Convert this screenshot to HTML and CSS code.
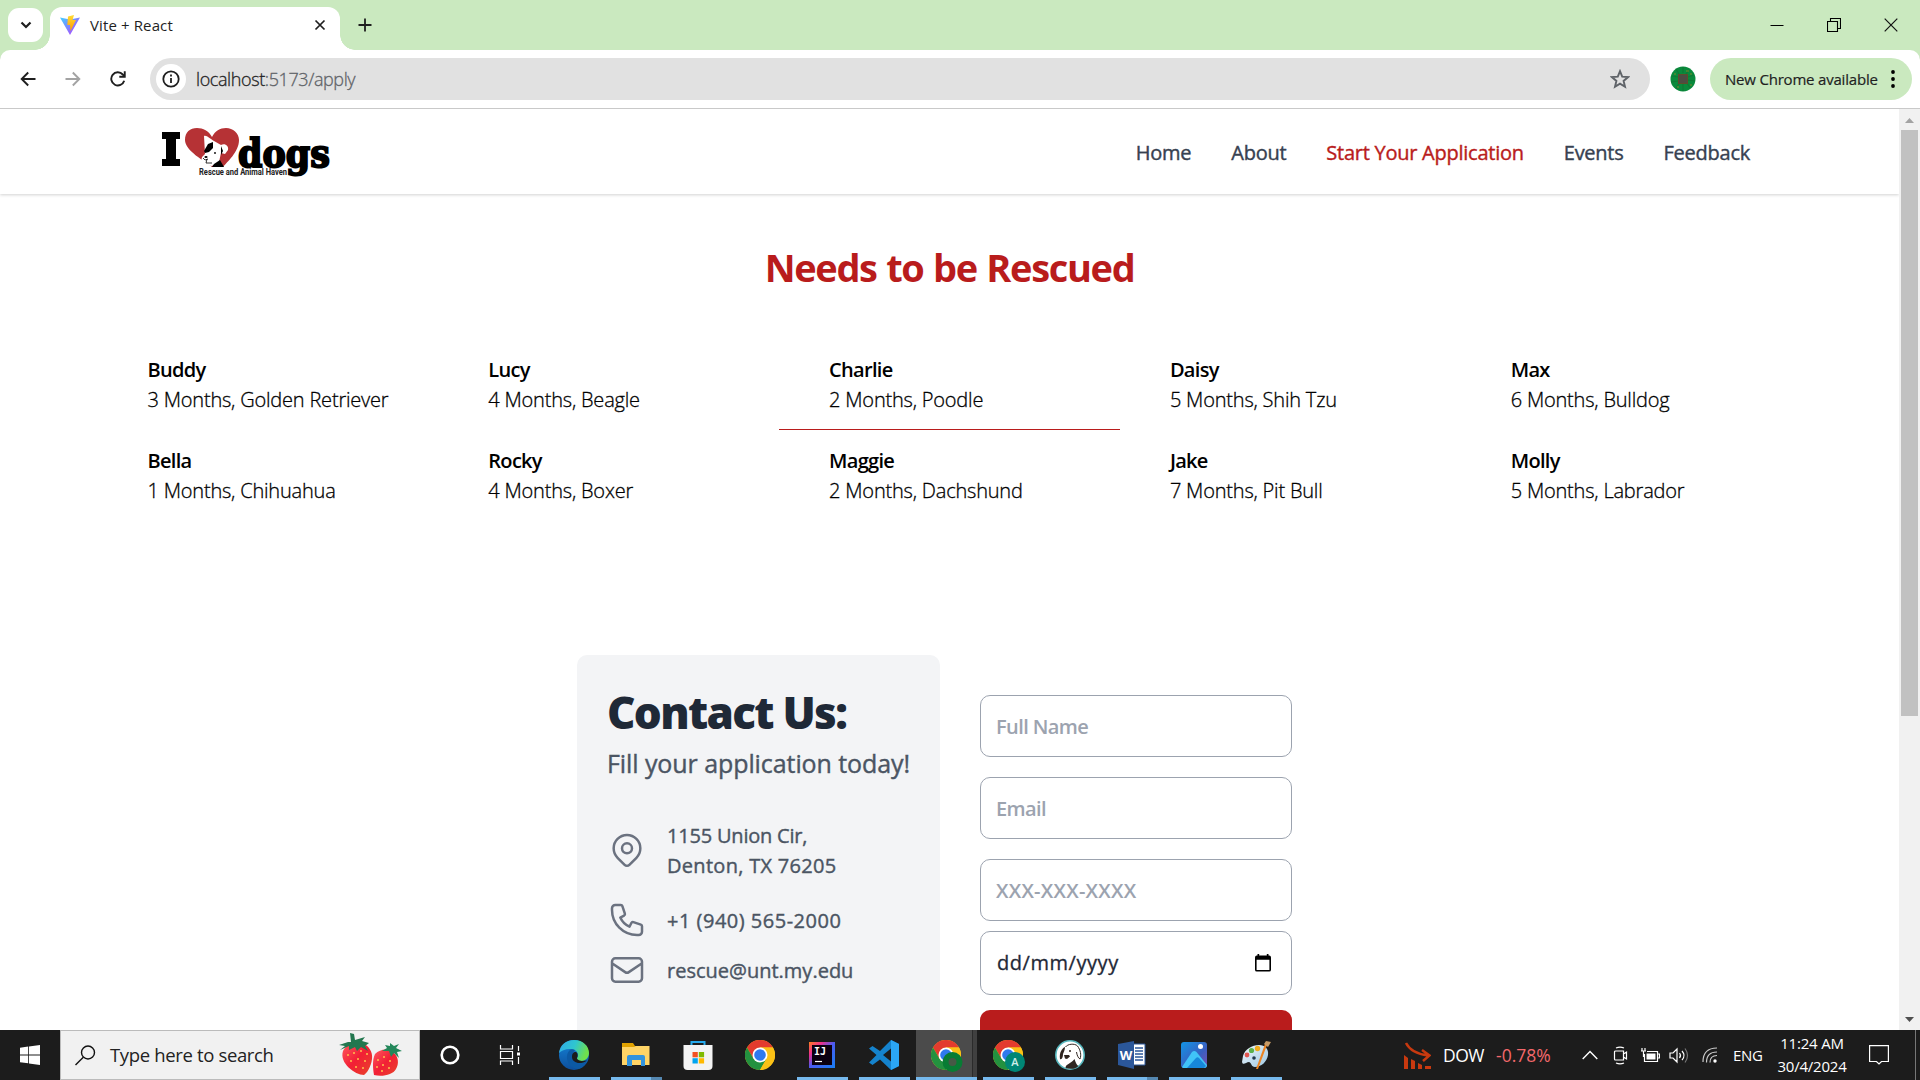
FILE: index.html
```html
<!DOCTYPE html>
<html lang="en">
<head>
<meta charset="utf-8">
<title>Vite + React</title>
<link rel="stylesheet" href="styles.css">
</head>
<body>
<svg width="0" height="0" class="defs" aria-hidden="true">
  <defs>
    <linearGradient id="viteA" x1="0" y1="0" x2="1" y2="1"><stop offset="0" stop-color="#41d1ff"/><stop offset="1" stop-color="#bd34fe"/></linearGradient>
    <linearGradient id="viteB" x1="0" y1="0" x2="0" y2="1"><stop offset="0" stop-color="#ffdd35"/><stop offset="1" stop-color="#ff9a00"/></linearGradient>
    <linearGradient id="edgeA" x1="0" y1="0" x2="1" y2=".3"><stop offset="0" stop-color="#2fa8ea"/><stop offset=".55" stop-color="#2fc6cf"/><stop offset="1" stop-color="#6fe04c"/></linearGradient>
    <linearGradient id="edgeB" x1="0" y1="0" x2="0" y2="1"><stop offset="0" stop-color="#1583d8"/><stop offset="1" stop-color="#0d4f9c"/></linearGradient>
    <linearGradient id="berry" x1="0" y1="0" x2="1" y2="1"><stop offset="0" stop-color="#ff5a5f"/><stop offset=".5" stop-color="#f21f35"/><stop offset="1" stop-color="#e8452a"/></linearGradient>
    <linearGradient id="ij" x1="0" y1="0" x2="1" y2="1"><stop offset="0" stop-color="#fc801d"/><stop offset=".25" stop-color="#f0308a"/><stop offset=".5" stop-color="#4b5bf0"/><stop offset="1" stop-color="#1780f5"/></linearGradient>
    <linearGradient id="photo" x1="0" y1="0" x2="1" y2="1"><stop offset="0" stop-color="#1295e6"/><stop offset=".6" stop-color="#3a5fc0"/><stop offset="1" stop-color="#7a4fb0"/></linearGradient>
    <linearGradient id="pal" x1="0" y1="0" x2="1" y2="1"><stop offset="0" stop-color="#f2f8fc"/><stop offset="1" stop-color="#9cc7e3"/></linearGradient>
    <symbol id="chrome" viewBox="0 0 30 30">
      <circle cx="15" cy="15" r="15" fill="#fbc116"/>
      <path d="M15 7.500H28A15 15 0 0 0 2 7.500L8.500 18.750z" fill="#e33b2e"/>
      <path d="M2 7.500A15 15 0 0 0 15 30L21.500 18.750 8.500 18.750z" fill="#23913f"/>
      <path d="M15 30A15 15 0 0 0 28 7.500H15L21.500 18.750z" fill="#fbc116"/>
      <circle cx="15" cy="15" r="7.500" fill="#fff"/><circle cx="15" cy="15" r="5.800" fill="#2f79ee"/>
    </symbol>
  </defs>
</svg>

<div class="tabstrip">
  <button class="tab-search"><svg width="12" height="12" viewBox="0 0 12 12"><path d="M1.500 3.500 6 8l4.500-4.500" fill="none" stroke="#1f1f1f" stroke-width="2.200"/></svg></button>
  <div class="tab">
    <svg width="20" height="20" viewBox="0 0 20 20"><path d="M0 2.500 10 20 20 2.500 10 4.500z" fill="url(#viteA)"/><path d="M8 1.500 14 0l-1.500 5H16L10.500 16l-.5-6H7.300z" fill="url(#viteB)"/></svg>
    <span class="tab-title">Vite + React</span>
    <svg width="12" height="12" viewBox="0 0 12 12"><path d="M1.500 1.500l9 9m0-9l-9 9" stroke="#1f1f1f" stroke-width="1.700"/></svg>
  </div>
  <svg class="new-tab" width="14" height="14" viewBox="0 0 14 14"><path d="M7 .5v13M.5 7h13" stroke="#1f1f1f" stroke-width="1.800"/></svg>
  <div class="window-controls">
    <svg width="14" height="14" viewBox="0 0 14 14"><path d="M.5 7.500h13" stroke="#000"/></svg>
    <svg width="14" height="14" viewBox="0 0 14 14"><path d="M.5 3.500h10v10h-10zM3.500 3.500v-3h10v10h-3" fill="none" stroke="#000" stroke-width="1.100"/></svg>
    <svg width="14" height="14" viewBox="0 0 14 14"><path d="M.7.7l12.600 12.600m0-12.600L.7 13.300" stroke="#111" stroke-width="1.200"/></svg>
  </div>
</div>

<div class="toolbar-wrap">
<div class="toolbar">
  <div class="nav-buttons">
    <svg width="16" height="16" viewBox="0 0 16 16"><path d="M15.500 8H2M8.200 1.500 1.700 8l6.500 6.500" fill="none" stroke="#1f1f1f" stroke-width="1.900"/></svg>
    <svg width="16" height="16" viewBox="0 0 16 16"><path d="M.5 8H14M7.800 1.500 14.300 8l-6.500 6.500" fill="none" stroke="#a3a3a3" stroke-width="1.900"/></svg>
    <svg width="16" height="16" viewBox="0 0 16 16"><path d="M14.200 9.800A6.600 6.600 0 1 1 12.800 3.500L14.500 5.300" fill="none" stroke="#1f1f1f" stroke-width="1.900"/><path d="M15.700.3v6.400H9.300V4.800h4.500V.3z" fill="#1f1f1f"/></svg>
  </div>
  <div class="omnibox">
    <span class="site-info"><svg width="18" height="18" viewBox="0 0 18 18"><circle cx="9" cy="9" r="7.700" fill="none" stroke="#1f1f1f" stroke-width="1.800"/><path d="M9 8v5M9 4.600v2" stroke="#1f1f1f" stroke-width="1.800"/></svg></span>
    <span class="url">localhost<span class="url-path">:5173/apply</span></span>
    <svg width="20" height="20" viewBox="0 0 20 20"><path d="M10 2.200l2.200 5.400 5.900.5-4.500 3.800 1.400 5.800-5-3.100-5 3.100 1.400-5.800L1.900 8.100l5.900-.5z" fill="none" stroke="#5f6368" stroke-width="1.900"/></svg>
  </div>
  <svg class="avatar" width="26" height="26" viewBox="0 0 26 26"><circle cx="13" cy="13" r="12.500" fill="#0a8a3c"/><path d="M6 3l3 5M13 1v6M19 4l-3 4M2 10l6 1M1 16l7-1M6 23l3-6M13 25v-7M20 22l-3-5M25 15l-7-1M24 9l-6 2" stroke="#0f7a35" stroke-width="1.200"/><path d="M16 5h3M21 7v2M4 8h2M20 19h2M8 20v2" stroke="#7d8a2b"/><rect x="8.500" y="8.500" width="9" height="9" fill="#4d4c43" stroke="#5e4d2c"/></svg>
  <div class="update"><span class="update-text">New Chrome available</span><svg width="4" height="18" viewBox="0 0 4 18"><circle cx="2" cy="2" r="1.900"/><circle cx="2" cy="9" r="1.900"/><circle cx="2" cy="16" r="1.900"/></svg></div>
</div>
</div>

<div class="viewport">
  <div class="page">
    <header class="site-header">
      <svg class="logo" width="172" height="56" viewBox="0 0 172 56">
        <path d="M1 6h18v7h-4v20h4v7H1v-7h4V13H1z"/>
        <path d="M51 41C44 35 24 25 24 14 24 6 29 2 36 2c6 0 12 3 15 9 3-6 8-9 14-9 7 0 13 5 13 12C78 26 66 36 62 41z" fill="#b63235"/>
        <path d="M43 10c3-1 6 3 10 5l7 4c4-2 8 1 7 5l-3 4-4-1-2 9-7 4-7-1-4-3 1-5 3-3z" fill="#fff"/>
        <path d="M52 16l-5 2-4 7 1 2 4-1 4-4z"/><path d="M60 20l2 5-2 4v-5z"/><path d="M53 38l6-4 4 7H51z"/>
        <path d="M42 32l2 2 3-1M46 33l-1 4 6 0" fill="none" stroke="#000" stroke-width=".8"/><circle cx="54" cy="27" r=".9"/><ellipse cx="45" cy="31" rx="1.600" ry="1"/>
        <text x="77" y="41" class="logo-word" textLength="92" lengthAdjust="spacingAndGlyphs">dogs</text>
        <text x="38" y="49" class="logo-sub" textLength="88" lengthAdjust="spacingAndGlyphs">Rescue and Animal Haven</text>
      </svg>
      <nav class="site-nav">
        <a>Home</a><a>About</a><a class="current">Start Your Application</a><a>Events</a><a>Feedback</a>
      </nav>
    </header>
    <main>
      <h1 class="title">Needs to be Rescued</h1>
      <div class="dogs">
        <div class="dog"><b>Buddy</b><p>3 Months, Golden Retriever</p></div>
        <div class="dog"><b>Lucy</b><p>4 Months, Beagle</p></div>
        <div class="dog selected"><b>Charlie</b><p>2 Months, Poodle</p></div>
        <div class="dog"><b>Daisy</b><p>5 Months, Shih Tzu</p></div>
        <div class="dog"><b>Max</b><p>6 Months, Bulldog</p></div>
        <div class="dog"><b>Bella</b><p>1 Months, Chihuahua</p></div>
        <div class="dog"><b>Rocky</b><p>4 Months, Boxer</p></div>
        <div class="dog"><b>Maggie</b><p>2 Months, Dachshund</p></div>
        <div class="dog"><b>Jake</b><p>7 Months, Pit Bull</p></div>
        <div class="dog"><b>Molly</b><p>5 Months, Labrador</p></div>
      </div>
      <section class="apply">
        <div class="contact">
          <h2 class="contact-title">Contact Us:</h2>
          <p class="contact-lead">Fill your application today!</p>
          <div class="info info-address">
            <svg viewBox="0 0 24 24"><path d="M17.657 16.657L13.414 20.900a1.998 1.998 0 01-2.827 0l-4.244-4.243a8 8 0 1111.314 0z"/><path d="M15 11a3 3 0 11-6 0 3 3 0 016 0z"/></svg>
            <div class="info-text"><span class="street">1155 Union Cir,</span><br>Denton, TX 76205</div>
          </div>
          <div class="info info-phone">
            <svg viewBox="0 0 24 24"><path d="M3 5a2 2 0 012-2h3.280a1 1 0 01.948.684l1.498 4.493a1 1 0 01-.502 1.210l-2.257 1.130a11.042 11.042 0 005.516 5.516l1.130-2.257a1 1 0 011.210-.502l4.493 1.498a1 1 0 01.684.949V19a2 2 0 01-2 2h-1C9.716 21 3 14.284 3 6V5z"/></svg>
            <div class="info-text">+1 (940) 565-2000</div>
          </div>
          <div class="info info-mail">
            <svg viewBox="0 0 24 24"><path d="M3 8l7.890 5.260a2 2 0 002.220 0L21 8M5 19h14a2 2 0 002-2V7a2 2 0 00-2-2H5a2 2 0 00-2 2v10a2 2 0 002 2z"/></svg>
            <div class="info-text">rescue@unt.my.edu</div>
          </div>
        </div>
        <form class="form">
          <div class="field">Full Name</div>
          <div class="field">Email</div>
          <div class="field field-phone">XXX-XXX-XXXX</div>
          <div class="field field-date"><span>dd/mm/yyyy</span><svg width="16" height="18" viewBox="0 0 16 18"><path d="M2.500 0h1.700v1.500h7.600V0h1.700v1.500H14A1.900 1.900 0 0 1 16 3.400v12.300A1.900 1.900 0 0 1 14 17.600H2A1.900 1.900 0 0 1 0 15.700V3.400A1.900 1.900 0 0 1 2 1.500h.5zM1.600 5.700v10.200h12.800V5.700z" fill-rule="evenodd"/></svg></div>
          <div class="submit"></div>
        </form>
      </section>
    </main>
  </div>
  <div class="scrollbar">
    <svg width="9" height="5" viewBox="0 0 9 5"><path d="M4.500 0 9 5H0z" fill="#a3a3a3"/></svg>
    <div class="thumb"></div>
    <svg width="9" height="5" viewBox="0 0 9 5"><path d="M4.500 5 9 0H0z" fill="#505050"/></svg>
  </div>
</div>

<footer class="taskbar">
  <div class="start"><svg width="20" height="20" viewBox="0 0 20 20"><path d="M0 2.800 8.200 1.600V9.400H0zM9 1.500 20 0v9.400H9zM0 10.400h8.200v7.900L0 17.200zM9 10.400h11V20L9 18.400z" fill="#fff"/></svg></div>
  <div class="search">
    <svg width="21" height="21" viewBox="0 0 21 21"><circle cx="13" cy="7.500" r="6.500" fill="none" stroke="#111" stroke-width="1.400"/><path d="M8.300 12.200.5 20" stroke="#111" stroke-width="1.400"/></svg>
    <span class="search-text">Type here to search</span>
    <svg class="berries" width="64" height="44" viewBox="0 0 64 44">
      <path d="M4 18C7 12 14 8 22 10c8 2 12 9 11 16-1 8-5 14-8 16C16 42 0 30 4 18z" fill="url(#berry)"/>
      <path d="M36 21c5-5 13-6 18-2 6 5 6 12 3 17-3 6-14 8-22 6-1-6-2-15 1-21z" fill="url(#berry)"/>
      <g fill="#ffc24d"><circle cx="9" cy="22" r="1"/><circle cx="15" cy="20" r="1"/><circle cx="22" cy="18" r="1"/><circle cx="28" cy="21" r="1"/><circle cx="12" cy="28" r="1"/><circle cx="19" cy="26" r="1"/><circle cx="26" cy="28" r="1"/><circle cx="17" cy="34" r="1"/><circle cx="24" cy="35" r="1"/><circle cx="39" cy="27" r="1"/><circle cx="45" cy="24" r="1"/><circle cx="51" cy="28" r="1"/><circle cx="38" cy="34" r="1"/><circle cx="44" cy="32" r="1"/><circle cx="50" cy="35" r="1"/><circle cx="43" cy="38" r="1"/></g>
      <path d="M1 17l5-4-6-1 9-3 3 0-1-9 4 1 1 6 10-3-3 4 7 2-4 3 3 5-7-4-4 4-2-4-6 3 0-4z" fill="#23774f"/>
      <path d="M43 18l5-3-2-3 5 1 0-3 4 3 5-2-3 4 6 3-5 1 2 6-5-5-3 4-2-6z" fill="#23875a"/>
    </svg>
  </div>
  <div class="sys"><svg width="20" height="20" viewBox="0 0 20 20"><circle cx="10" cy="10" r="8.300" fill="none" stroke="#fff" stroke-width="2.600"/></svg></div>
  <div class="sys sys-view"><svg width="22" height="20" viewBox="0 0 22 20"><path d="M1.500 0v4h12V0M1.500 20v-4h12v4M1.500 6.500h12v7h-12zM19.500 1v5M19.500 12v7" fill="none" stroke="#fff" stroke-width="1.200"/><path d="M18 7.500h3v3h-3z" fill="#fff"/></svg></div>
  <div class="apps">
    <div class="app open"><svg viewBox="0 0 30 30"><circle cx="15" cy="15" r="15" fill="url(#edgeB)"/><path d="M0 13C1 5 7 0 15 0c9 0 15 6 15 13 0 5-4 8-8 8-3 0-5-1-4-3 1-1 1-2 1-3 0-4-4-6-8-6-5 0-9 2-11 4z" fill="url(#edgeA)"/><path d="M11 10c-6 5-3 18 8 19 4-1 7-4 9-8-9 4-16-1-14-7 0-2 1-3 2-4-2-1-4-1-5 0z" fill="#0c59a4"/><path d="M13 17c0-3 1-5 4-5 2 1 2 4 1 6 0 2 3 3 6 3l4-.5c-7 5-15 2-15-3.500z" fill="#1c1c1c"/></svg></div>
    <div class="app open multi"><svg viewBox="0 0 30 30"><path d="M1 3h11l2 3h12v8H1z" fill="#e1a200"/><path d="M1 7h12l2-1h13.500v19H1z" fill="#ffd466"/><path d="M6 25V17a2 2 0 0 1 2-2h14a2 2 0 0 1 2 2v9h-4v-6h-9v6H6z" fill="#3293dd"/></svg></div>
    <div class="app"><svg viewBox="0 0 30 30"><path d="M8.500 8V2h13v6" fill="none" stroke="#25a9ec" stroke-width="2"/><path d="M.5 5h29v21a4 4 0 0 1-4 4h-21a4 4 0 0 1-4-4z" fill="#f3f3f3"/><path d="M9.500 12h5.300v5.300H9.500z" fill="#f25022"/><path d="M15.800 12h5.300v5.300h-5.300z" fill="#7fba00"/><path d="M9.500 18.200h5.300v5.300H9.500z" fill="#00a4ef"/><path d="M15.800 18.200h5.300v5.300h-5.300z" fill="#ffb900"/></svg></div>
    <div class="app"><svg viewBox="0 0 30 30"><use href="#chrome"/></svg></div>
    <div class="app open"><svg viewBox="0 0 30 30"><path d="M2 2h26v26H2z" fill="url(#ij)"/><path d="M5 5h20v20H5z" fill="#0b0010"/><path d="M8 21.500h7" stroke="#fff" stroke-width="1.200"/><text x="7" y="15" class="ij-text">IJ</text></svg></div>
    <div class="app open"><svg viewBox="0 0 30 30"><path fill-rule="evenodd" d="M22 0l8 4v22l-8 4L11 19.500 3.500 25 0 22.500 7.500 15 0 8.500 3.500 6 11 11zM22 8.500 14 15l8 6.500z" fill="#1583cd"/><path d="M22 0l8 4v22l-8 4z" fill="#2ba6f4"/></svg></div>
    <div class="app open active"><svg viewBox="0 0 30 30"><use href="#chrome"/><circle cx="21.500" cy="22" r="7" fill="#465946" stroke="#087c34" stroke-width="6"/></svg></div>
    <div class="app open"><svg viewBox="0 0 30 30"><use href="#chrome"/><circle cx="22" cy="22" r="10" fill="#008675"/><text x="22" y="26" class="badge-text">A</text></svg></div>
    <div class="app open"><svg viewBox="0 0 30 30"><circle cx="15" cy="15" r="14.200" fill="#fff" stroke="#55b6bd" stroke-width="1.600"/><path d="M10.500 7c2-3 9-4 12-1 3 4 4 9 2.500 13-2-1-3-4-3.500-7" fill="none" stroke="#302621" stroke-width="1"/><path d="M10 7c-3 1-6 6-5 12 2 1 3-2 3-5 1-2 2-5 2-7zM9 15h5l1 1.500-3 2.500-2-.5z" fill="#302621"/><path d="M10.500 28c0-4 5-4 9-9 1 3 2 6 4 7-3 3-8 3.500-13 2z" fill="#302621"/><circle cx="15" cy="11" r="1" fill="#302621"/></svg></div>
    <div class="app open multi"><svg viewBox="0 0 30 30"><path d="M15 4h13v21H15z" fill="#fff" stroke="#2b579a"/><path d="M18 8h8M18 11h8M18 14h8M18 17h8M18 20h8" stroke="#2b579a" stroke-width="1.300"/><path d="M1 4l16-3v28L1 25z" fill="#2b579a"/><text x="9" y="20" class="word-text">W</text></svg></div>
    <div class="app open"><svg viewBox="0 0 30 30"><rect x="2" y="2" width="26" height="26" rx="3" fill="url(#photo)"/><path d="M3 27 13 12c1.300-1.500 3-1.500 4.500 0L28 25c0 2-1 3-3 3H5c-1 0-2-.5-2-1z" fill="#40c3f7"/><path d="M8 28 17 18c1-1 2-1 3 0l7 8-2 2z" fill="#1687db"/><circle cx="21.500" cy="6.500" r="2.500" fill="#fff"/></svg></div>
    <div class="app open"><svg viewBox="0 0 30 30"><path d="M2 16C4 9 11 5 18 5c6 0 10 4 9 10-1 7-7 12-13 12-4 0-3-4-6-5-3 0-6 4-7 0z" fill="url(#pal)"/><circle cx="6" cy="15" r="2.400" fill="#e0564f"/><circle cx="10.500" cy="10.500" r="2.600" fill="#5bb04b"/><circle cx="16.500" cy="8.500" r="2.700" fill="#f2ac1e"/><circle cx="13" cy="18" r="1.800" fill="#22384d"/><path d="M26 5 17 29l-2 0 9-25z" fill="#ec8423"/><path d="M23 4l2-3 5 1-3 5z" fill="#c69a66"/></svg></div>
  </div>
  <div class="tray">
    <svg class="t-stock" width="27" height="28" viewBox="0 0 27 28"><path d="M2 2c3 6 10 11 22 12.500M18 9l7.500 5.500L19 20" fill="none" stroke="#c8390f" stroke-width="2.500"/><path d="M0 14l4 3v11H0zM7 18l4 2v8H7zM14 22l4 2v4h-4zM21 25h6v3h-6z" fill="#c8390f"/></svg>
    <span class="t-dow">DOW</span><span class="t-change">-0.78%</span>
    <svg class="t-chev" width="16" height="10" viewBox="0 0 16 10"><path d="M.7 9 8 1.500 15.300 9" fill="none" stroke="#fff" stroke-width="1.400"/></svg>
    <svg class="t-cam" width="16" height="19" viewBox="0 0 16 19"><path d="M2.500 5h8v9h-8a1 1 0 0 1-1-1V6a1 1 0 0 1 1-1zM10.500 8l3-2v7l-3-2M3 2Q7 .3 11 2M3 17q4 1.700 8 0" fill="none" stroke="#fff" stroke-width="1.200"/></svg>
    <svg class="t-bat" width="20" height="15" viewBox="0 0 20 15"><path d="M4.500 6v7.500h13V3.500H7M17.500 6h2v4h-2M1 3h5M2 0v3M5 0v3M3.500 3v6" fill="none" stroke="#fff" stroke-width="1.200"/><path d="M6.500 5.500h9v6h-9z" fill="#fff"/></svg>
    <svg class="t-vol" width="20" height="17" viewBox="0 0 20 17"><path d="M1 6h3l4-4v13l-4-4H1zM10.500 6q2 2.500 0 5M13 4q4 4.500 0 9" fill="none" stroke="#fff" stroke-width="1.200"/><path d="M16 1.500q5 7 0 14" fill="none" stroke="#777" stroke-width="1.200"/></svg>
    <svg class="t-wifi" width="16" height="16" viewBox="0 0 16 16"><path d="M1 15Q1 1 15 1M4.500 15.500Q4.500 5 15 5M8 15.500Q8 8.500 15 8.500" fill="none" stroke="#ccc" stroke-width="1.200"/><circle cx="13" cy="14" r="1.700" fill="#fff"/></svg>
    <span class="t-lang">ENG</span>
    <div class="t-clock"><span class="t-time">11:24 AM</span><span class="t-date">30/4/2024</span></div>
    <svg class="t-note" width="20" height="20" viewBox="0 0 20 20"><path d="M.6.600h18.800v15.900h-6.900l-2.500 2.500-2.500-2.500H.6z" fill="none" stroke="#fff" stroke-width="1.200"/></svg>
    <span class="t-edge"></span>
  </div>
</footer>
</body>
</html>
```
FILE: styles.css
```css
* { box-sizing: border-box; margin: 0; padding: 0; }
body {
  width: 1920px; height: 1080px; overflow: hidden;
  display: flex; flex-direction: column;
  font-family: "Open Sans", "Noto Sans", sans-serif;
  font-size: 20px; line-height: 30px; background: #fff; color: #000;
  white-space: nowrap;
}
svg { display: block; flex: none; }
.defs { position: absolute; }
b, h1, h2 { font-weight: 600; }

/* browser frame */
.tabstrip { height: 50px; flex: none; background: #cae9bf; display: flex; align-items: center; padding-left: 8px; }
.tab-search { width: 35px; height: 34px; border: 0; border-radius: 11px; background: #fff; display: flex; align-items: center; justify-content: center; }
.tab {
  position: relative; align-self: flex-end; width: 290px; height: 43px; margin-left: 7px;
  background: #fff; border-radius: 12px 12px 0 0; display: flex; align-items: center; padding: 0 14px 7px 10px;
}
.tab::before, .tab::after { content: ""; position: absolute; bottom: 0; width: 15px; height: 15px; }
.tab::before { left: -15px; background: radial-gradient(circle at 0 0, transparent 14.5px, #fff 15px); }
.tab::after { right: -15px; background: radial-gradient(circle at 100% 0, transparent 14.5px, #fff 15px); }
.tab-title { flex: 1; margin-left: 10px; font-size: 15px; line-height: 20px; letter-spacing: 0.12px; color: #1f1f1f; }
.new-tab { margin-left: 18px; }
.window-controls { margin-left: auto; display: flex; gap: 43px; padding-right: 22px; }
.toolbar-wrap { flex: none; background: #cae9bf; }
.toolbar { height: 59px; display: flex; align-items: center; box-shadow: inset 0 -1px #c9c9c9; padding: 0 8px 1px 0; background: #fff; border-radius: 10px 10px 0 0; }
.nav-buttons { display: flex; gap: 29px; width: 150px; padding-left: 20px; }
.omnibox { width: 1500px; height: 42px; border-radius: 21px; background: #e1e1e1; display: flex; align-items: center; padding: 0 20px 0 6px; }
.site-info { width: 30px; height: 30px; border-radius: 50%; background: #fff; display: flex; align-items: center; justify-content: center; }
.url { flex: 1; margin-left: 10px; font-size: 18px; letter-spacing: -0.4px; font-weight: 300; -webkit-text-stroke: 0.3px; color: #1f1f1f; }
.url-path { color: #5f6368; }
.avatar { margin-left: 20px; }
.update { margin-left: 14px; flex: 1; height: 42px; border-radius: 21px; background: #cae9bf; display: flex; align-items: center; justify-content: space-between; padding: 0 17px 0 15px; }
.update-text { font-size: 15px; letter-spacing: -0.2px; -webkit-text-stroke: 0.2px; color: #1f1f1f; }

.viewport { flex: 1; min-height: 0; display: flex; overflow: hidden; }
.page { width: 1899px; height: 921px; overflow: hidden; }
.scrollbar { width: 21px; background: #f1f1f1; display: flex; flex-direction: column; align-items: center; padding: 9px 0 8px; }
.thumb { width: 17px; height: 586px; margin: 7px 0 auto; background: #c1c1c1; }

/* site header */
.site-header { height: 85px; display: flex; align-items: center; justify-content: space-between; padding: 0 149px 0 161px; box-shadow: 0 1px 3px rgba(0,0,0,.18); }
.logo { margin-top: 5px; overflow: visible; }
.logo-word { font: 700 39px "DejaVu Serif", serif; stroke: #000; stroke-width: 2px; }
.logo-sub { font: 700 8.5px Roboto, sans-serif; fill: #222; }
.site-nav { display: flex; gap: 40px; margin-top: 3px; -webkit-text-stroke: 0.4px; color: #374151; letter-spacing: -0.25px; }
.current { color: #b91c1c; }

/* dog list */
.title { margin-top: 48px; height: 50px; line-height: 50px; font-size: 38px; font-weight: 700; text-align: center; color: #b91c1c; letter-spacing: -1.35px; word-spacing: 1px; }
.dogs { display: grid; grid-template-columns: repeat(5, 340.8px); grid-auto-rows: 91px; margin: 47px 0 0 97.5px; }
.dog { padding: 16px 0 0 50px; border-bottom: 1px solid transparent; }
.dog b { display: block; letter-spacing: -0.7px; }
.dog p { font-weight: 300; -webkit-text-stroke: 0.3px; letter-spacing: -0.2px; }
.selected { border-color: #b91c1c; }

/* application */
.apply { display: flex; gap: 40px; margin: 134px 0 0 577px; }
.contact { width: 363px; height: 500px; background: #f3f4f6; border-radius: 10px; padding: 30px; }
.contact-title { font-size: 44px; line-height: 55px; font-weight: 800; letter-spacing: -1.7px; color: #1f2937; }
.contact-lead { margin-top: 6px; font-size: 25px; line-height: 35px; -webkit-text-stroke: 0.4px; color: #4b5563; letter-spacing: -0.08px; }
.info { display: flex; align-items: center; gap: 20px; color: #4b5563; -webkit-text-stroke: 0.4px #4b5563; letter-spacing: 0.3px; }
.info svg { width: 40px; height: 40px; fill: none; stroke: #6b7280; stroke-width: 1.5; stroke-linecap: round; stroke-linejoin: round; }
.info-address { margin-top: 40px; }
.info-address svg { margin-bottom: 2px; }
.street { letter-spacing: -0.2px; }
.info-phone { margin-top: 20px; height: 40px; letter-spacing: 0.5px; }
.info-phone svg, .info-mail svg { margin-bottom: 2px; }
.info-mail { margin-top: 10px; height: 40px; letter-spacing: 0; }
.form { width: 312px; padding-top: 40px; }
.field { height: 62px; margin-bottom: 20px; border: 1px solid #9ca3af; border-radius: 10px; padding: 0 15px; line-height: 62px; font-weight: 600; color: #9ca3af; letter-spacing: -0.6px; }
.field-phone { margin-bottom: 10px; letter-spacing: 0.25px; }
.field-date { height: 64px; margin-bottom: 15px; display: flex; justify-content: space-between; align-items: center; padding: 0 20px 0 16px; color: #1f2937; font-weight: 400; -webkit-text-stroke: 0.3px; letter-spacing: 0.55px; }
.submit { height: 60px; background: #b91c1c; border-radius: 10px; }

/* taskbar */
.taskbar { height: 50px; flex: none; background: #1c1c1c; display: flex; color: #fff; }
.start { width: 60px; display: flex; align-items: center; justify-content: center; }
.search { width: 360px; border: 1px solid #bbb; background: #f1f1f1; display: flex; align-items: center; padding: 0 16px 0 14px; }
.search-text { flex: 1; margin-left: 14px; font-size: 18.5px; color: #222; letter-spacing: -0.35px; }
.sys { width: 60px; display: flex; align-items: center; justify-content: center; }
.sys-view { width: 63px; padding-right: 3px; }
.apps { display: flex; }
.app { width: 62px; display: flex; align-items: center; justify-content: center; }
.app svg { width: 30px; height: 30px; overflow: visible; }
.open { background: linear-gradient(#76b9ed, #76b9ed) 6px 47px / 51px 3px no-repeat; }
.multi { background: linear-gradient(#76b9ed, #76b9ed) 6px 47px / 40px 3px no-repeat, linear-gradient(#5588b1, #5588b1) 46px 47px / 11px 3px no-repeat; }
.active { background: linear-gradient(#76b9ed, #76b9ed) 1px 47px / 61px 3px no-repeat, linear-gradient(90deg, transparent 1px, #4b4b4b 1px 57px, #2b2b2b 57px 58px, #404040 58px); }
.ij-text { font: 700 10px "DejaVu Sans Mono", monospace; fill: #fff; }
.badge-text { font: 600 11px "Open Sans", sans-serif; fill: #cfeee9; text-anchor: middle; }
.word-text { font: 700 13px "Open Sans", sans-serif; fill: #fff; text-anchor: middle; }
.tray { flex: 1; display: flex; align-items: center; font-size: 17.5px; }
.t-stock { margin-left: 117px; }
.t-dow { width: 53px; margin-left: 12px; letter-spacing: -0.5px; }
.t-change { width: 86px; color: #f3686b; }
.t-cam { margin-left: 15px; }
.t-bat { margin-left: 11px; }
.t-vol { margin-left: 9px; }
.t-wifi { margin-left: 13px; }
.t-lang { width: 40px; margin-left: 15px; font-size: 15px; letter-spacing: -0.3px; }
.t-clock { width: 76px; display: flex; flex-direction: column; align-items: center; margin-left: 1px; font-size: 15px; line-height: 23px; letter-spacing: -0.2px; }
.t-note { margin-left: 19px; }
.t-edge { width: 1px; height: 50px; margin-left: 26px; background: #777; }
```
